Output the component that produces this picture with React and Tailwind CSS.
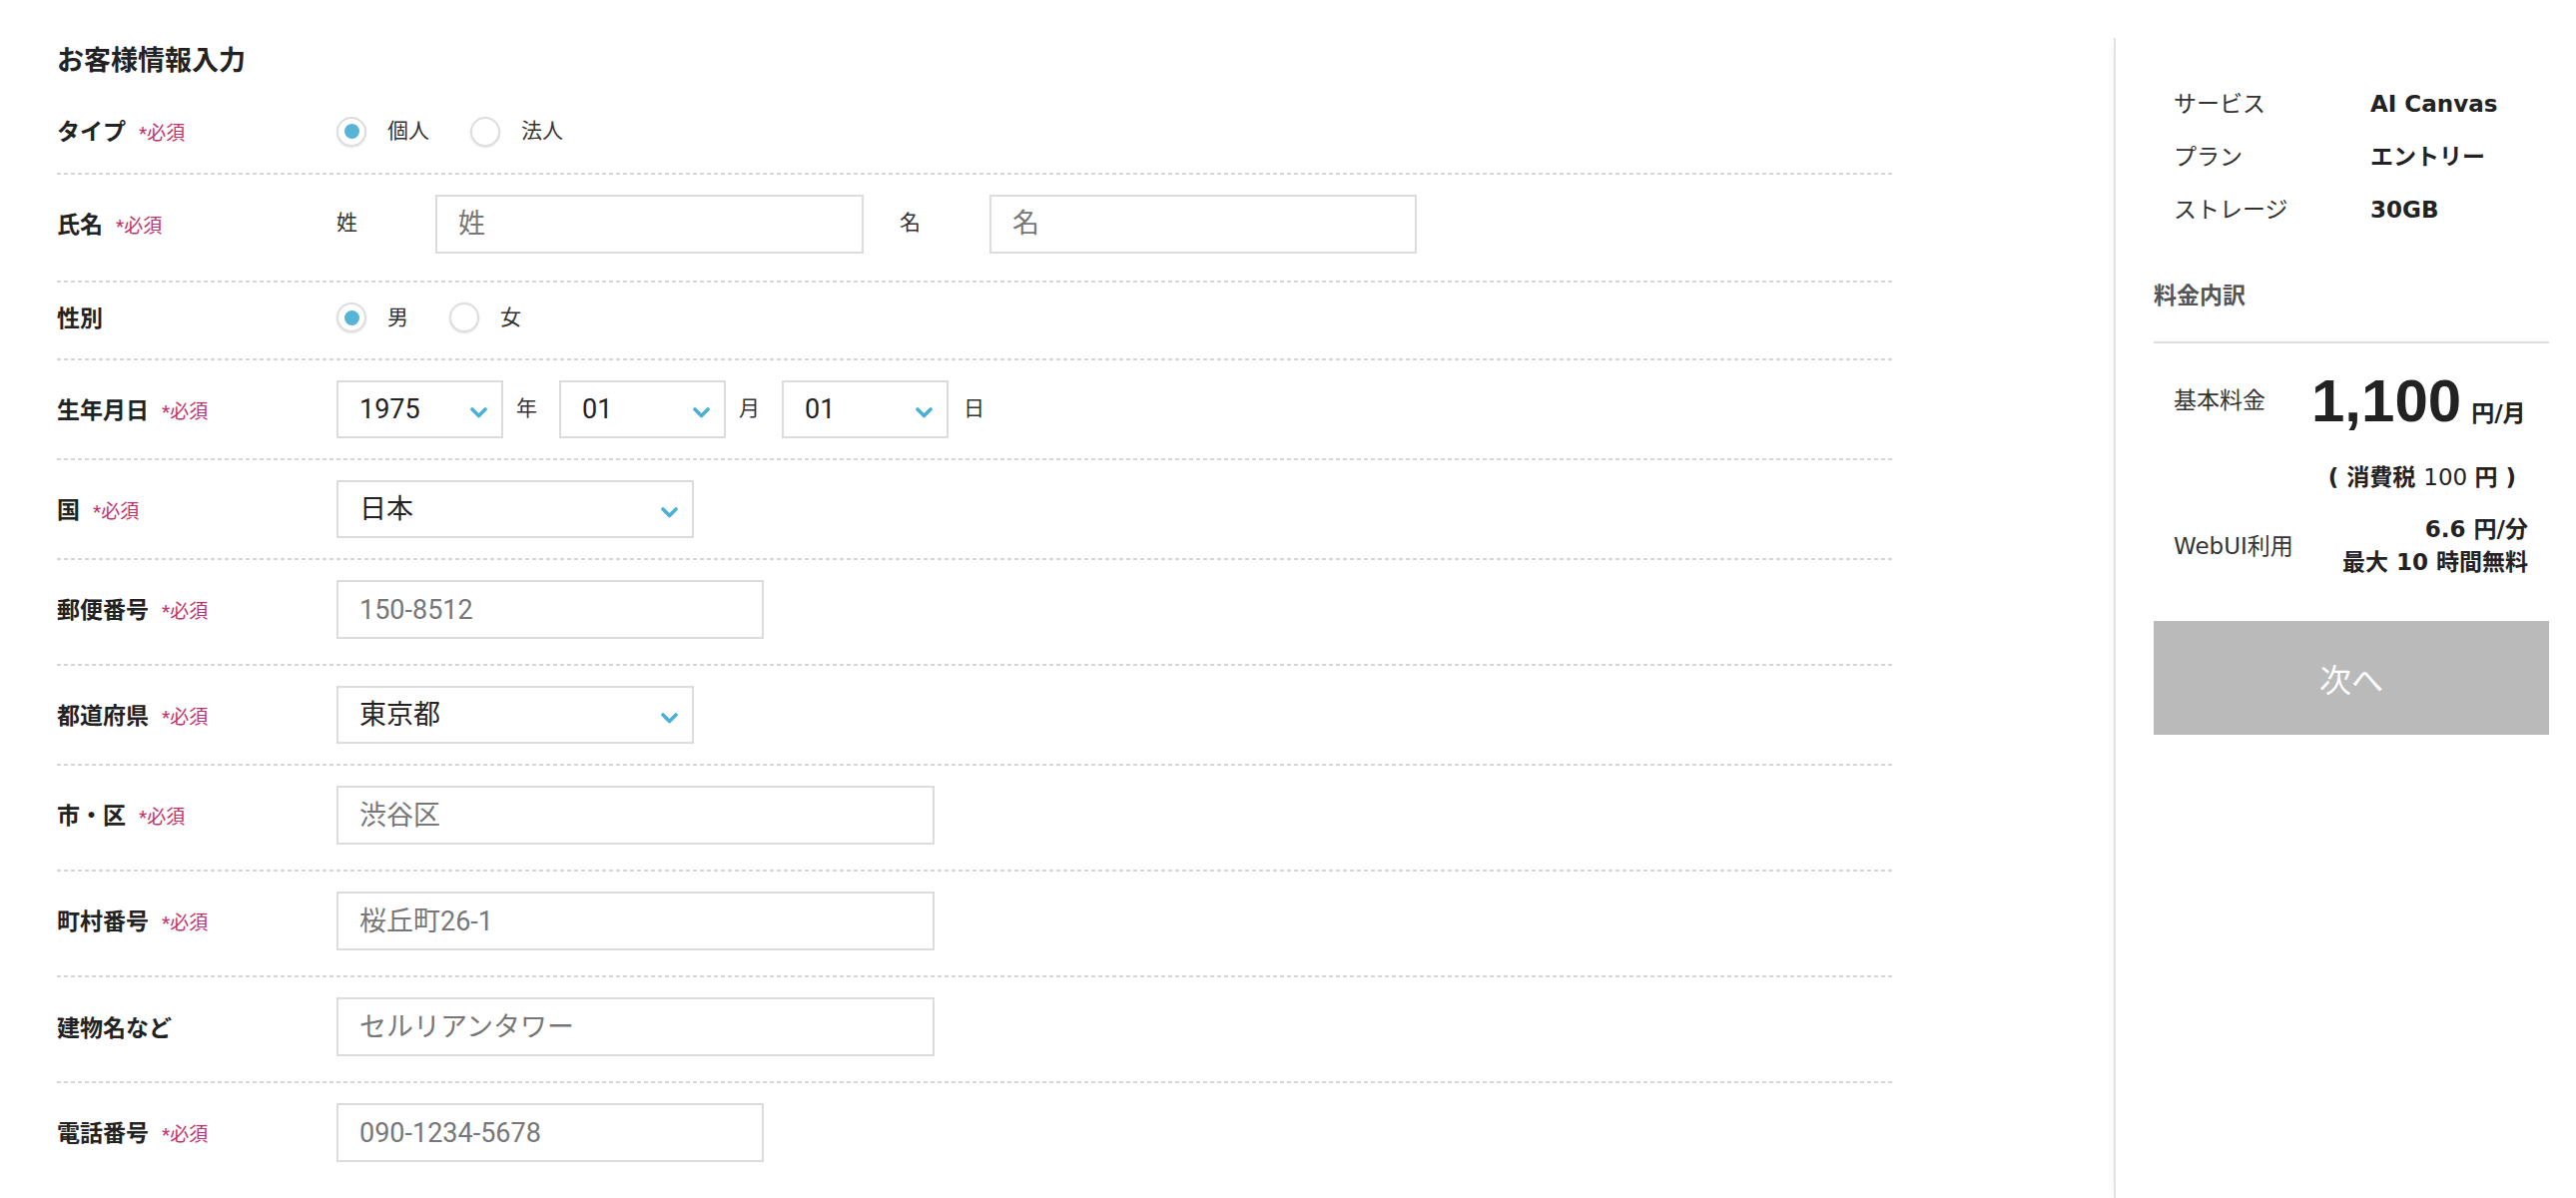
import React from 'react';

const Required = () => (
  <span className="ml-[13px] text-[19px] font-normal text-[#c5306a]">*必須</span>
);

function Divider() {
  return (
    <div className="h-[2px] bg-[repeating-linear-gradient(90deg,#d6d6d6_0px,#d6d6d6_4px,transparent_4px,transparent_7px)]" />
  );
}

function Row({ label, required, children, pb, last }) {
  return (
    <div>
      <div className={`flex items-center pt-[20px] ${pb || 'pb-[25px]'}`}>
        <div className="w-[280px] shrink-0 flex items-baseline translate-y-[2px] text-[23px] leading-[30px] font-bold text-[#222]">
          {label}
          {required && <Required />}
        </div>
        <div className="flex items-center">{children}</div>
      </div>
      {!last && <Divider />}
    </div>
  );
}

function Radio({ checked, label, className }) {
  return (
    <label className={`flex items-center ${className || ''}`}>
      <span className="w-[30px] h-[30px] rounded-full border-2 border-[#dedede] bg-white shadow-[0_1px_2px_rgba(0,0,0,0.12)] flex items-center justify-center">
        {checked && <span className="w-[15px] h-[15px] rounded-full bg-[#56b4d6]" />}
      </span>
      <span className="ml-[21px] text-[21px] text-[#333]">{label}</span>
    </label>
  );
}

function TextInput({ placeholder, width }) {
  return (
    <input
      type="text"
      placeholder={placeholder}
      className={`h-[59px] ${width} border-2 border-[#dcdcdc] bg-white pl-[21px] text-[27px] text-[#222] placeholder:text-[#777] outline-none`}
    />
  );
}

function Chevron() {
  return (
    <svg width="17" height="11" viewBox="0 0 17 11" className="mt-[6px]">
      <polyline points="2,2 8.5,8.5 15,2" fill="none" stroke="#4bb0d8" strokeWidth="3.6" strokeLinecap="round" strokeLinejoin="round" />
    </svg>
  );
}

function Select({ value, width }) {
  return (
    <div className={`h-[58px] ${width} border-2 border-[#dcdcdc] bg-white pl-[21px] pr-[14px] flex items-center justify-between text-[27px] text-[#222]`}>
      <span>{value}</span>
      <Chevron />
    </div>
  );
}

const Unit = ({ children, className }) => (
  <span className={`text-[21px] text-[#333] ${className}`}>{children}</span>
);

export default function App() {
  const plan = [
    ['サービス', 'AI Canvas'],
    ['プラン', 'エントリー'],
    ['ストレージ', '30GB'],
  ];

  return (
    <div className="w-[2580px] h-[1200px] bg-white flex font-['Roboto','Noto_Sans_CJK_JP',sans-serif] text-[#222]">
      {/* form */}
      <div className="ml-[57px] w-[1838px] shrink-0 pt-[41px]">
        <h1 className="text-[27px] leading-[36px] font-bold text-[#222] font-['Noto_Sans_CJK_JP',sans-serif]">
          お客様情報入力
        </h1>

        <div className="mt-[19px]">
          <Row label="タイプ" required>
            <Radio checked label="個人" />
            <Radio label="法人" className="ml-[41px]" />
          </Row>

          <Row label="氏名" required pb="pb-[27px]">
            <Unit className="w-[99px]">姓</Unit>
            <TextInput placeholder="姓" width="w-[429px]" />
            <Unit className="ml-[36px] w-[90px]">名</Unit>
            <TextInput placeholder="名" width="w-[428px]" />
          </Row>

          <Row label="性別">
            <Radio checked label="男" />
            <Radio label="女" className="ml-[41px]" />
          </Row>

          <Row label="生年月日" required pb="pb-[20px]">
            <Select value="1975" width="w-[167px]" />
            <Unit className="ml-[13px]">年</Unit>
            <div className="ml-[22px]">
              <Select value="01" width="w-[167px]" />
            </div>
            <Unit className="ml-[13px]">月</Unit>
            <div className="ml-[22px]">
              <Select value="01" width="w-[167px]" />
            </div>
            <Unit className="ml-[15px]">日</Unit>
          </Row>

          <Row label="国" required pb="pb-[20px]">
            <Select value="日本" width="w-[358px]" />
          </Row>

          <Row label="郵便番号" required>
            <TextInput placeholder="150-8512" width="w-[428px]" />
          </Row>

          <Row label="都道府県" required pb="pb-[20px]">
            <Select value="東京都" width="w-[358px]" />
          </Row>

          <Row label="市・区" required>
            <TextInput placeholder="渋谷区" width="w-[599px]" />
          </Row>

          <Row label="町村番号" required>
            <TextInput placeholder="桜丘町26-1" width="w-[599px]" />
          </Row>

          <Row label="建物名など">
            <TextInput placeholder="セルリアンタワー" width="w-[599px]" />
          </Row>

          <Row label="電話番号" required last>
            <TextInput placeholder="090-1234-5678" width="w-[428px]" />
          </Row>
        </div>
      </div>

      {/* summary panel */}
      <aside className="ml-[222px] mt-[38px] w-[463px] shrink-0 border-l-2 border-[#e2e2e2] shadow-[-6px_0_8px_-6px_rgba(0,0,0,0.06)] pl-[38px] pr-[27px] font-['DejaVu_Sans','Noto_Sans_CJK_JP',sans-serif]">
        <div className="pt-[40px] pl-[20px] text-[23px] leading-[53px]">
          {plan.map(([k, v]) => (
            <div key={k} className="flex">
              <span className="w-[197px] text-[#333]">{k}</span>
              <span className="font-bold text-[#222]">{v}</span>
            </div>
          ))}
        </div>

        <div className="mt-[44px] text-[23px] leading-[30px] font-bold text-[#555]">料金内訳</div>
        <div className="mt-[31px] h-[2px] bg-[#dddddd]" />

        <div className="mt-[28px] pl-[20px] flex items-start">
          <span className="mt-[14px] w-[138px] text-[23px] leading-[30px] text-[#333]">基本料金</span>
          <div className="flex items-baseline">
            <span className="text-[60px] leading-[60px] font-bold text-[#222] font-['Liberation_Sans',sans-serif]">1,100</span>
            <span className="ml-[10px] text-[23px] font-bold text-[#222]">円/月</span>
          </div>
        </div>

        <div className="mt-[31px] pr-[33px] flex justify-end text-[23px] leading-[30px] text-[#222]">
          <span className="font-bold">(&nbsp;消費税&nbsp;</span>
          <span>100&nbsp;</span>
          <span className="font-bold">円&nbsp;)</span>
        </div>

        <div className="mt-[21px] pl-[20px] pr-[21px] flex items-center justify-between">
          <span className="text-[23px] text-[#333]">WebUI利用</span>
          <div className="text-right text-[23px] leading-[33px] font-bold text-[#222]">
            <div>6.6 円/分</div>
            <div>最大 10 時間無料</div>
          </div>
        </div>

        <button className="mt-[42px] h-[114px] w-full bg-[#bababa] text-white text-[32px] flex items-center justify-center font-['Noto_Sans_CJK_JP',sans-serif]">
          次へ
        </button>
      </aside>
    </div>
  );
}
